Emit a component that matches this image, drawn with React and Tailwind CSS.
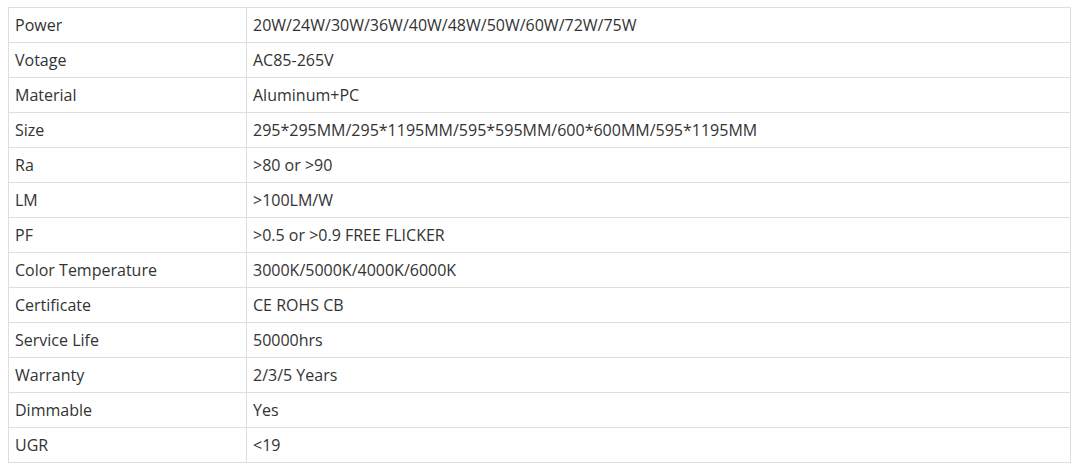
const rows = [
  ['Power', '20W/24W/30W/36W/40W/48W/50W/60W/72W/75W'],
  ['Votage', 'AC85-265V'],
  ['Material', 'Aluminum+PC'],
  ['Size', '295*295MM/295*1195MM/595*595MM/600*600MM/595*1195MM'],
  ['Ra', '>80 or >90'],
  ['LM', '>100LM/W'],
  ['PF', '>0.5 or >0.9 FREE FLICKER'],
  ['Color Temperature', '3000K/5000K/4000K/6000K'],
  ['Certificate', 'CE ROHS CB'],
  ['Service Life', '50000hrs'],
  ['Warranty', '2/3/5 Years'],
  ['Dimmable', 'Yes'],
  ['UGR', '<19'],
]

export default function App() {
  return (
    <div className="bg-white w-[1080px] h-[469px] pt-[7px] pl-[8px] text-[#333] text-[16px]"
      style={{ fontFamily: '"Open Sans", "Noto Sans", sans-serif' }}>
      <table className="border-collapse w-[1063px] table-fixed">
        <tbody>
          {rows.map(([k, v]) => (
            <tr key={k} className="h-[35px]">
              <td className="w-[238px] border border-[#dedede] px-[6px] py-0 leading-[34px]">{k}</td>
              <td className="border border-[#dedede] px-[6px] py-0 leading-[34px]">{v}</td>
            </tr>
          ))}
        </tbody>
      </table>
    </div>
  )
}
